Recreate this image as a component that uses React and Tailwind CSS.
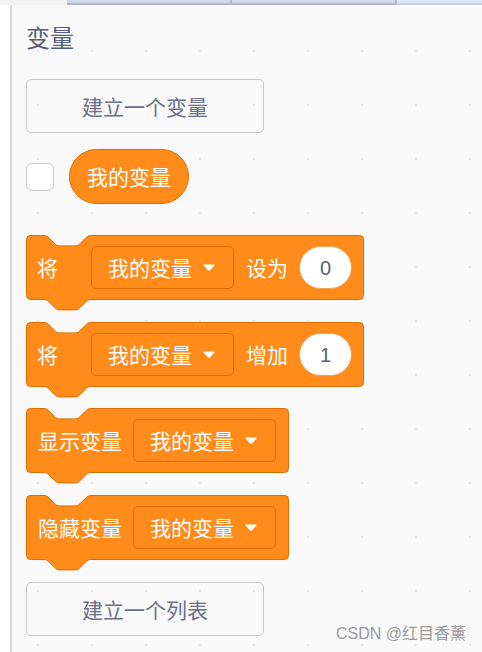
import React from 'react';

const font = "font-['Noto_Sans_CJK_SC',sans-serif]";

// scratch-style stack block outline with top notch and bottom tab
const blockPath = (w, h) => {
  const n = 'c 2.6 0 3.9 1.3 5.2 2.6 l 5.2 5.2 c 1.3 1.3 2.6 2.6 5.2 2.6 h 15.6 c 2.6 0 3.9 -1.3 5.2 -2.6 l 5.2 -5.2 c 1.3 -1.3 2.6 -2.6 5.2 -2.6';
  const nBack = 'c -2.6 0 -3.9 1.3 -5.2 2.6 l -5.2 5.2 c -1.3 1.3 -2.6 2.6 -5.2 2.6 h -15.6 c -2.6 0 -3.9 -1.3 -5.2 -2.6 l -5.2 -5.2 c -1.3 -1.3 -2.6 -2.6 -5.2 -2.6';
  return `M 0.5 4.5 A 4 4 0 0 1 4.5 0.5 H 18 ${n} H ${w - 4.5} A 4 4 0 0 1 ${w - 0.5} 4.5 V ${h - 4.5} A 4 4 0 0 1 ${w - 4.5} ${h - 0.5} H 64.8 ${nBack} H 4.5 A 4 4 0 0 1 0.5 ${h - 4.5} Z`;
};

const Caret = () => (
  <svg width="14" height="9" viewBox="0 0 14 9" className="shrink-0">
    <path d="M2 1.5 H12 Q13.2 1.5 12.4 2.6 L7.9 7.4 Q7 8.3 6.1 7.4 L1.6 2.6 Q0.8 1.5 2 1.5 Z" fill="#fff" />
  </svg>
);

const Dropdown = () => (
  <div className="flex items-center h-[43px] w-[143px] pl-[16px] rounded-[5px] border border-[#db6e00] bg-[#ff8c1a]">
    <span className="text-[21px] leading-none text-white">我的变量</span>
    <span className="ml-[10px]"><Caret /></span>
  </div>
);

const NumberInput = ({ value }) => (
  <div className="flex items-center justify-center h-[43px] w-[53px] rounded-full bg-white border border-[#e9a25a]">
    <span className="font-['Liberation_Sans',sans-serif] text-[20px] leading-none text-[#575e75]">{value}</span>
  </div>
);

const Block = ({ width, children, className = '' }) => (
  <div className={`relative h-[65px] ${className}`} style={{ width }}>
    <svg className="absolute left-0 top-0 overflow-visible" width={width} height={77}>
      <path d={blockPath(width, 65)} fill="#ff8c1a" stroke="#db6e00" strokeWidth="1" />
    </svg>
    <div className="relative flex items-center h-full">{children}</div>
  </div>
);

const Button = ({ label, className = '' }) => (
  <div className={`flex items-center justify-center w-[238px] h-[54px] rounded-[5px] border border-[#c8c8c8] ${className}`}>
    <span className="text-[21px] leading-none text-[#6b7085]">{label}</span>
  </div>
);

export default function App() {
  return (
    <div className={`w-[482px] h-[652px] bg-white flex flex-col overflow-hidden ${font}`}>
      {/* tab strip */}
      <div className="flex h-[5px] shrink-0">
        <div className="w-[67px] bg-[#f3f3f3]" />
        <div className="w-[163px] bg-[#cfd9e8] border-b-2 border-[#aeb9cc]" />
        <div className="w-[2px] bg-[#aeb9cc]" />
        <div className="w-[163px] bg-[#cfd9e8] border-b-2 border-[#aeb9cc]" />
        <div className="w-[2px] bg-[#aeb9cc]" />
        <div className="flex-1 bg-[#dce7f7] border-b-2 border-[#c7d3e6]" />
      </div>

      <div className="flex flex-1">
        <div className="w-[10px] bg-white" />
        <div className="w-[2px] bg-[#d9d9d9]" />
        <div className="flex-1 flex flex-col pl-[14px] bg-[#f9f9f9] bg-[radial-gradient(circle,#e6e6e6_1px,transparent_1.5px)] bg-size-[54px_54px] bg-position-[-1px_19px] relative">
          <div className="mt-[20px] h-[24px] flex items-center">
            <span className="text-[24px] leading-none text-[#575e75]">变量</span>
          </div>

          <Button label="建立一个变量" className="mt-[30px]" />

          <div className="flex items-center mt-[16px] h-[55px]">
            <div className="w-[28px] h-[28px] rounded-[6px] bg-white border border-[#c8c8c8]" />
            <div className="ml-[15px] flex items-center justify-center h-[55px] w-[120px] rounded-full bg-[#ff8c1a] border border-[#db6e00]">
              <span className="text-[21px] leading-none text-white">我的变量</span>
            </div>
          </div>

          <Block width={338} className="mt-[31px]">
            <span className="ml-[11px] text-[21px] leading-none text-white">将</span>
            <div className="ml-[33px]"><Dropdown /></div>
            <span className="ml-[12px] text-[21px] leading-none text-white">设为</span>
            <div className="ml-[11px]"><NumberInput value="0" /></div>
          </Block>

          <Block width={338} className="mt-[22px]">
            <span className="ml-[11px] text-[21px] leading-none text-white">将</span>
            <div className="ml-[33px]"><Dropdown /></div>
            <span className="ml-[12px] text-[21px] leading-none text-white">增加</span>
            <div className="ml-[11px]"><NumberInput value="1" /></div>
          </Block>

          <Block width={263} className="mt-[21px]">
            <span className="ml-[12px] text-[21px] leading-none text-white">显示变量</span>
            <div className="ml-[11px]"><Dropdown /></div>
          </Block>

          <Block width={263} className="mt-[22px]">
            <span className="ml-[12px] text-[21px] leading-none text-white">隐藏变量</span>
            <div className="ml-[11px]"><Dropdown /></div>
          </Block>

          <Button label="建立一个列表" className="mt-[22px]" />

          <span className="absolute right-[16px] bottom-[10px] text-[16px] leading-none text-[#9a9a9a] font-['Liberation_Sans','Noto_Sans_CJK_SC',sans-serif]">
            CSDN @红目香薰
          </span>
        </div>
      </div>
    </div>
  );
}
